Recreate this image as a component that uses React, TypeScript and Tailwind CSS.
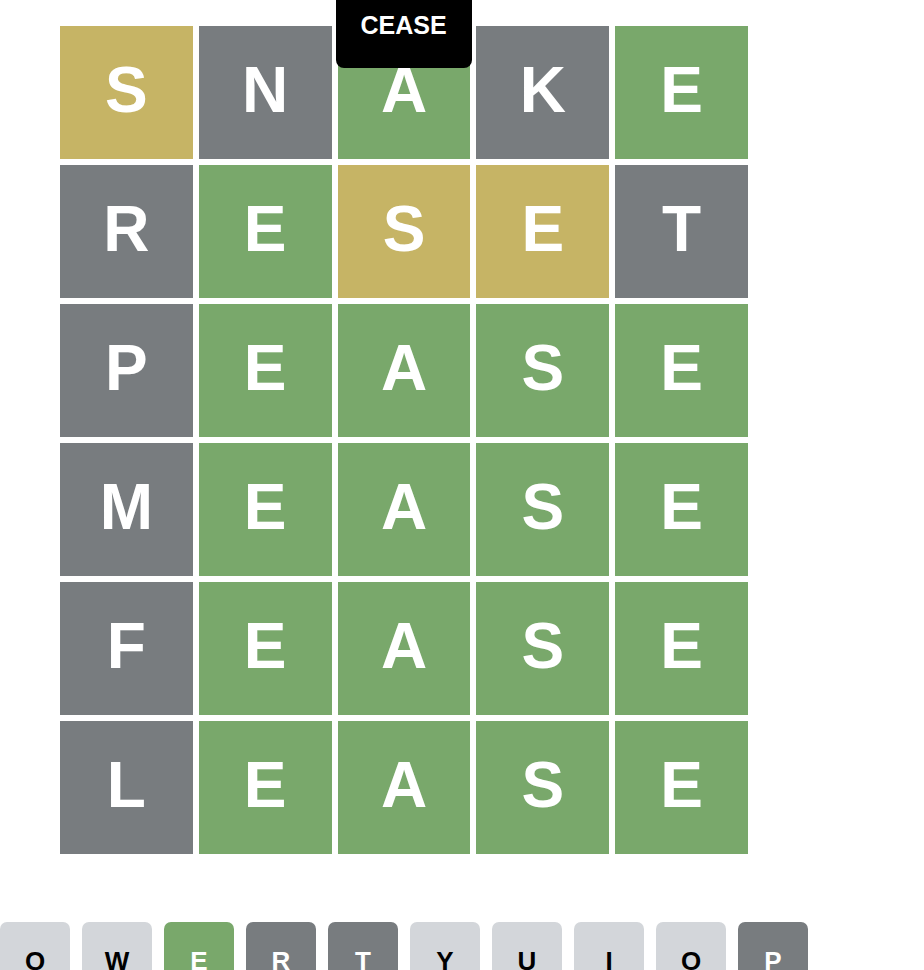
const rows: { l: string; c: 'g' | 'y' | 'x' }[][] = [
  [
    { l: 'S', c: 'y' },
    { l: 'N', c: 'x' },
    { l: 'A', c: 'g' },
    { l: 'K', c: 'x' },
    { l: 'E', c: 'g' },
  ],
  [
    { l: 'R', c: 'x' },
    { l: 'E', c: 'g' },
    { l: 'S', c: 'y' },
    { l: 'E', c: 'y' },
    { l: 'T', c: 'x' },
  ],
  ...['P', 'M', 'F', 'L'].map((f) => [
    { l: f, c: 'x' as const },
    { l: 'E', c: 'g' as const },
    { l: 'A', c: 'g' as const },
    { l: 'S', c: 'g' as const },
    { l: 'E', c: 'g' as const },
  ]),
];

const tileBg = {
  g: 'bg-[#79a86b]',
  y: 'bg-[#c6b465]',
  x: 'bg-[#787c7f]',
};

const keys: { k: string; s: 'g' | 'x' | 'n' }[] = [
  { k: 'Q', s: 'n' },
  { k: 'W', s: 'n' },
  { k: 'E', s: 'g' },
  { k: 'R', s: 'x' },
  { k: 'T', s: 'x' },
  { k: 'Y', s: 'n' },
  { k: 'U', s: 'n' },
  { k: 'I', s: 'n' },
  { k: 'O', s: 'n' },
  { k: 'P', s: 'x' },
];

const keyStyle = {
  g: 'bg-[#79a86b] text-white',
  x: 'bg-[#787c7f] text-white',
  n: 'bg-[#d3d6da] text-black',
};

export default function App() {
  return (
    <div
      className="relative w-[924px] h-[970px] overflow-hidden bg-white"
      style={{ fontFamily: '"Liberation Sans", Arial, sans-serif' }}
    >
      <div className="pl-[60px] pt-[26px]">
        <div className="grid grid-cols-[repeat(5,132.8px)] gap-[6px]">
          {rows.map((row, ri) =>
            row.map((t, ci) => (
              <div
                key={`${ri}-${ci}`}
                className={`relative h-[133px] flex items-center justify-center pb-[5px] text-white text-[64px] font-bold leading-none ${tileBg[t.c]}`}
              >
                {t.l}
                {ri === 0 && ci === 2 && (
                  <div className="absolute -top-[26px] -left-[2px] w-[136px] h-[68px] bg-black rounded-b-[8px] text-center text-white text-[25px] font-bold leading-none pt-[13px]">
                    CEASE
                  </div>
                )}
              </div>
            ))
          )}
        </div>
      </div>

      <div className="mt-[68px] flex gap-[12px]">
        {keys.map((k) => (
          <div
            key={k.k}
            className={`w-[70px] h-[78px] shrink-0 rounded-[7px] flex items-center justify-center text-[26px] font-bold ${keyStyle[k.s]}`}
          >
            {k.k}
          </div>
        ))}
      </div>
    </div>
  );
}
